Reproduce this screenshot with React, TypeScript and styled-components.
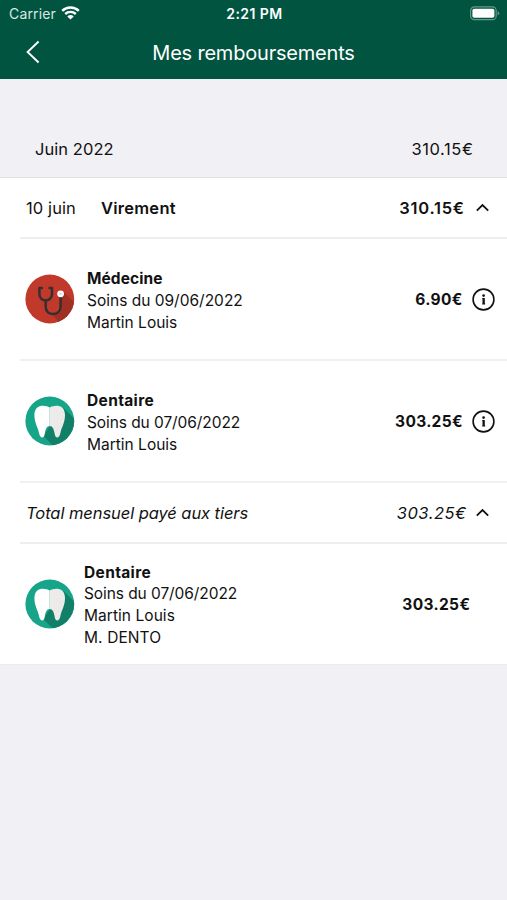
import React from "react";
import styled, { createGlobalStyle } from "styled-components";

const GlobalStyle = createGlobalStyle`
  * { box-sizing: border-box; }
  html, body { margin: 0; padding: 0; background: #f0f0f5; }
  body { font-family: Inter, "Liberation Sans", sans-serif; color: #111; }
  svg { display: block; flex: none; }
`;

const Screen = styled.main`
  width: 507px;
  height: 900px;
  overflow: hidden;
  background: #f0f0f5;
`;

const Header = styled.header`
  height: 79px;
  background: #005440;
  color: #fff;
`;

const StatusBar = styled.div`
  height: 27px;
  display: grid;
  grid-template-columns: 1fr auto 1fr;
  align-items: center;
  padding: 0 7px 0 9px;
`;

const Carrier = styled.div`
  display: flex;
  align-items: center;
  gap: 5px;
  color: #d9e8e3;
`;

const Battery = styled.div`
  display: flex;
  justify-content: flex-end;
`;

const NavBar = styled.nav`
  height: 52px;
  display: grid;
  grid-template-columns: 60px 1fr 60px;
  align-items: center;
  justify-items: center;
`;

const BackButton = styled.button`
  display: flex;
  padding: 0;
  margin: 0 0 2px 5px;
  border: 0;
  background: none;
  color: #fff;
`;

const Text = styled.span<{ $size?: number; $weight?: number; $spacing?: number; $italic?: boolean }>`
  font-size: ${(p) => p.$size ?? 16}px;
  font-weight: ${(p) => p.$weight ?? 400};
  font-style: ${(p) => (p.$italic ? "italic" : "normal")};
  letter-spacing: ${(p) => p.$spacing ?? 0}px;
  line-height: 22px;
  white-space: nowrap;
`;

const Price = styled(Text)`
  margin-right: ${(p) => -(p.$spacing ?? 0)}px;
`;

const MonthHeader = styled.section`
  height: 99px;
  display: flex;
  align-items: flex-end;
  justify-content: space-between;
  padding: 0 34px 17px 35px;
  border-bottom: 1px solid #e2e2e5;
`;

const List = styled.section`
  background: #fff;
  padding-left: 20px;
  border-bottom: 1px solid #ebebee;
`;

const SummaryRow = styled.div`
  height: 61px;
  display: flex;
  align-items: center;
  padding: 0 18px 0 6px;
  border-bottom: 2px solid #eeeeef;
`;

const DateCell = styled.div`
  width: 75px;
`;

const Amount = styled.div<{ $gap?: number }>`
  display: flex;
  align-items: center;
  gap: ${(p) => p.$gap ?? 12}px;
  margin-left: auto;
`;

const CareRow = styled.article<{ $gap?: number; $end?: number; $last?: boolean }>`
  height: ${(p) => (p.$last ? 120 : 122)}px;
  display: flex;
  align-items: center;
  gap: ${(p) => p.$gap ?? 12}px;
  padding: 1px ${(p) => p.$end ?? 12}px 0 5px;
  border-bottom: ${(p) => (p.$last ? "0" : "2px solid #f1f1f2")};
`;

const Badge = styled.div`
  padding-bottom: 2px;
`;

const Details = styled.div<{ $top?: number }>`
  display: flex;
  flex-direction: column;
  padding-top: ${(p) => p.$top ?? 3}px;
`;

const Line = styled(Text)`
  line-height: 21.7px;
`;

const WifiIcon = () => (
  <svg width="19" height="15" viewBox="0 0 19 15" fill="none" stroke="#fff" strokeWidth="2.4">
    <path d="M1.2 4.9C5.9.4 13.1.4 17.8 4.9" />
    <path d="M4.2 8C7.2 5.2 11.8 5.2 14.8 8" />
    <path d="M9.5 13.6 6.3 10.4Q9.5 7.8 12.7 10.4Z" fill="#fff" stroke="none" />
  </svg>
);

const BatteryIcon = () => (
  <svg width="31" height="15" viewBox="0 0 31 15">
    <rect x="1.6" y="0.9" width="25.6" height="12.8" rx="3.8" fill="none" stroke="#679887" strokeWidth="1.2" />
    <rect x="3.4" y="2.8" width="22" height="9" rx="1.8" fill="#fff" />
    <path d="M28.6 5.2Q30.3 5.7 30.3 7.3T28.6 9.4Z" fill="#679887" />
  </svg>
);

const BackIcon = () => (
  <svg width="14" height="24" viewBox="0 0 14 24" fill="none" stroke="currentColor" strokeWidth="1.9">
    <path d="M12.6 1.5 1.6 12 12.6 22.5" />
  </svg>
);

const ChevronUp = () => (
  <svg width="13" height="9" viewBox="0 0 13 9" fill="none" stroke="#111" strokeWidth="1.8">
    <path d="M.8 7.6 6.5 2 12.2 7.6" />
  </svg>
);

const InfoIcon = () => (
  <svg width="23" height="23" viewBox="0 0 23 23">
    <circle cx="11.5" cy="11.5" r="10.4" fill="none" stroke="#111" strokeWidth="1.6" />
    <circle cx="11.6" cy="7.6" r="1.35" fill="#111" />
    <path d="M10.2 10H12.8V15.4H13.2V16.4H10.2V15.4H10.5V11H10.2Z" fill="#111" />
  </svg>
);

const StethoscopeIcon = () => (
  <svg width="50" height="50" viewBox="0 0 50 50">
    <defs>
      <clipPath id="redDisc"><circle cx="24.8" cy="25" r="24.4" /></clipPath>
    </defs>
    <circle cx="24.8" cy="25" r="24.4" fill="#c0392b" />
    <path d="M38 17 54 33V54H38L27 40 34 36Z" fill="#a03024" clipPath="url(#redDisc)" />
    <g fill="none" stroke="#35302f" strokeWidth="2.5" strokeLinecap="round" strokeLinejoin="round">
      <path d="M16.8 14H14.4V20C14.4 28.5 27 28.5 27 20V14H24.6" />
      <path d="M20.7 26.5V33C20.7 42.5 35.6 42.5 35.6 32.5V22" />
    </g>
    <circle cx="35.6" cy="19.8" r="3.4" fill="#fff" />
    <circle cx="35.6" cy="19.8" r="1.3" fill="#d8d8d8" />
  </svg>
);

const ToothIcon = () => (
  <svg width="50" height="50" viewBox="0 0 50 50">
    <defs>
      <clipPath id="greenDisc"><circle cx="24.8" cy="25" r="24.4" /></clipPath>
    </defs>
    <circle cx="24.8" cy="25" r="24.4" fill="#16a589" />
    <path d="M38.5 12 56 29V56H34L18.5 40 25 30Z" fill="#128069" clipPath="url(#greenDisc)" />
    <path d="M24.7 11.5C20 8.5 9.4 8 9.4 19C9.4 27 12.8 31 13.9 36.5C15 43 18.9 43 19.7 38C20.5 33 21.7 30 24.7 30Z" fill="#fff" />
    <path d="M24.7 11.5C29.4 8.5 40 8 40 19C40 27 36.6 31 35.5 36.5C34.4 43 30.5 43 29.7 38C28.9 33 27.7 30 24.7 30Z" fill="#ecebea" />
  </svg>
);

export default function App() {
  return (
    <>
      <GlobalStyle />
      <Screen>
        <Header>
          <StatusBar>
            <Carrier>
              <Text $size={14} $spacing={0.15}>Carrier</Text>
              <WifiIcon />
            </Carrier>
            <Text $size={14} $weight={600} $spacing={0.45}>2:21 PM</Text>
            <Battery><BatteryIcon /></Battery>
          </StatusBar>
          <NavBar>
            <BackButton aria-label="Retour"><BackIcon /></BackButton>
            <Text $size={20} $spacing={-0.2}>Mes remboursements</Text>
          </NavBar>
        </Header>

        <MonthHeader>
          <Text $size={16.5} $spacing={0.05}>Juin 2022</Text>
          <Price $size={16.5} $spacing={0.6}>310.15€</Price>
        </MonthHeader>

        <List>
          <SummaryRow>
            <DateCell><Text $size={16.5} $spacing={0.1}>10 juin</Text></DateCell>
            <Text $size={16.5} $weight={600} $spacing={0.25}>Virement</Text>
            <Amount>
              <Price $size={16.5} $weight={600} $spacing={0.75}>310.15€</Price>
              <ChevronUp />
            </Amount>
          </SummaryRow>

          <CareRow>
            <Badge><StethoscopeIcon /></Badge>
            <Details>
              <Line $size={15.5} $weight={700} $spacing={0.1}>Médecine</Line>
              <Line $size={15.5}>Soins du 09/06/2022</Line>
              <Line $size={15.5}>Martin Louis</Line>
            </Details>
            <Amount $gap={9.5}>
              <Price $size={15.5} $weight={700} $spacing={0.4}>6.90€</Price>
              <InfoIcon />
            </Amount>
          </CareRow>

          <CareRow>
            <Badge><ToothIcon /></Badge>
            <Details>
              <Line $size={15.5} $weight={700} $spacing={0.35}>Dentaire</Line>
              <Line $size={15.5} $spacing={-0.08}>Soins du 07/06/2022</Line>
              <Line $size={15.5}>Martin Louis</Line>
            </Details>
            <Amount $gap={9.5}>
              <Price $size={15.5} $weight={700} $spacing={0.3}>303.25€</Price>
              <InfoIcon />
            </Amount>
          </CareRow>

          <SummaryRow>
            <Text $size={16.5} $italic $spacing={-0.07}>Total mensuel payé aux tiers</Text>
            <Amount $gap={10}>
              <Price $size={16.5} $italic $spacing={0.5}>303.25€</Price>
              <ChevronUp />
            </Amount>
          </SummaryRow>

          <CareRow $gap={9} $end={37} $last>
            <Badge><ToothIcon /></Badge>
            <Details $top={1.3}>
              <Line $size={15.5} $weight={700} $spacing={0.35}>Dentaire</Line>
              <Line $size={15.5} $spacing={-0.08}>Soins du 07/06/2022</Line>
              <Line $size={15.5} $spacing={0.05}>Martin Louis</Line>
              <Line $size={15.5} $spacing={0.1}>M. DENTO</Line>
            </Details>
            <Amount>
              <Price $size={15.5} $weight={700} $spacing={0.35}>303.25€</Price>
            </Amount>
          </CareRow>
        </List>
      </Screen>
    </>
  );
}
